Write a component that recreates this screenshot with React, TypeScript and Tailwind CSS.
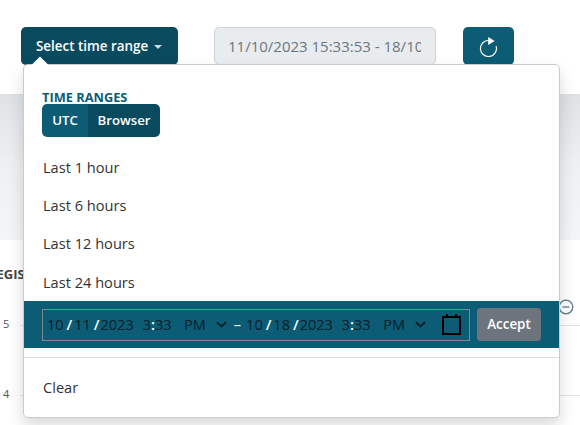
import React from "react";

const font = { fontFamily: '"Open Sans", "Noto Sans", sans-serif' };

function Segments({ d }: { d: string }) {
  return (
    <div className="flex items-center text-[14.5px] leading-[20px] text-[#04202b]">
      <span>10</span>
      <span className="ml-[3px] mr-[2px] text-white font-semibold">/</span>
      <span>{d}</span>
      <span className="ml-[3px] mr-[1px] text-white font-semibold">/</span>
      <span>2023</span>
      <span className="ml-[9px]">3</span>
      <span className="text-white font-semibold">:</span>
      <span>33</span>
      <span className="ml-[12.5px]">PM</span>
      <svg className="ml-[10px]" width="11" height="7" viewBox="0 0 11 7" fill="none">
        <path d="M1 1.2 5.5 5.4 10 1.2" stroke="#04202b" strokeWidth="2" />
      </svg>
    </div>
  );
}

export default function App() {
  return (
    <div className="relative w-[580px] h-[425px] overflow-hidden bg-white" style={font}>
      <div className="flex items-start h-[94px] pt-[27px] pl-[21px] bg-white">
        <button className="flex items-center h-[38px] w-[157px] pl-[15px] rounded-[5px] bg-[#0a4a5f] text-white text-[13.4px] font-semibold">
          Select time range
          <span className="ml-[6px] mt-[1px] border-x-[4px] border-x-transparent border-t-[4px] border-t-white opacity-80" />
        </button>
        <div className="ml-[36px] w-[222px] h-[38px] rounded-[5px] border border-[#ced4da] bg-[#e9ecef] pl-[13px] pr-[14px] flex items-center text-[#6c757d] text-[15px] whitespace-nowrap">
          <span className="block w-full overflow-hidden">11/10/2023 15:33:53 - 18/10/2023 15:33:53</span>
        </div>
        <button className="ml-[27px] w-[51px] h-[38px] rounded-[5px] bg-[#0c5c75] flex items-center justify-center">
          <svg width="20" height="22" viewBox="0 0 20 22" fill="none">
            <path d="M10 5.5A8 8 0 1 0 17.1 11.1" stroke="white" strokeWidth="1.2" />
            <path d="M9.2 2 15.6 6 9.2 10Z" fill="white" />
          </svg>
        </button>
      </div>
      <div className="h-[146px] bg-gradient-to-b from-[#dfe2e5] via-[#eef0f2] to-[#f4f5f6]" />
      <div className="relative h-[185px] bg-white">
        <div className="pt-[25px] -ml-[12px] text-[#444] text-[13px] font-bold">REGIS</div>
        <div className="absolute left-[3px] top-[76px] text-[11px] text-[#555]">5</div>
        <div className="absolute left-[3px] top-[146px] text-[11px] text-[#555]">4</div>
        <div className="absolute left-[20px] right-0 top-[85px] h-px bg-[#e3e3e3]" />
        <div className="absolute left-[20px] right-0 top-[155px] h-px bg-[#e3e3e3]" />
        <svg className="absolute left-[558px] top-[59px]" width="16" height="16" viewBox="0 0 16 16" fill="none">
          <circle cx="8" cy="8" r="6.8" stroke="#5f7a8c" strokeWidth="1.3" />
          <path d="M4.5 8h7" stroke="#5f7a8c" strokeWidth="1.3" />
        </svg>
      </div>

      <div className="absolute left-[23px] top-[64px] w-[537px] h-[354px] rounded-[5px] border border-[#c9cccf] bg-white shadow-[0_8px_16px_rgba(0,0,0,0.15)]">
        <div className="absolute left-[10px] -top-[6px] w-[12px] h-[12px] rotate-45 bg-white" />
        <div className="pt-[25px] pl-[18px]">
          <div className="text-[12.8px] leading-[14px] font-bold text-[#0c5c75]">TIME RANGES</div>
          <div className="flex h-[33px] w-[118px] text-white text-[13.2px] font-semibold">
            <span className="flex items-center justify-center w-[46px] rounded-l-[5px] bg-[#0c5c75]">UTC</span>
            <span className="flex items-center justify-center w-[72px] rounded-r-[5px] bg-[#0a4a5f]">Browser</span>
          </div>
        </div>
        <ul className="mt-[12px] text-[14.6px] text-[#333]">
          {["Last 1 hour", "Last 6 hours", "Last 12 hours"].map((t) => (
            <li key={t} className="h-[38px] pl-[19px] flex items-center">{t}</li>
          ))}
          <li className="h-[38px] pl-[19px] pt-[1px] flex items-center">Last 24 hours</li>
        </ul>
        <div className="flex items-center h-[47px] pl-[18px] pr-[18px] bg-[#0c5c75]">
          <div className="flex items-center w-[428px] h-[32px] border border-[#7c8a90] pl-[4px]">
            <Segments d="11" />
            <span className="ml-[7px] mr-[5px] text-[14.5px] leading-[20px] text-white">–</span>
            <Segments d="18" />
            <svg className="ml-[16px]" width="20" height="21" viewBox="0 0 20 21" fill="none">
              <rect x="1" y="3" width="17" height="17" stroke="black" strokeWidth="2" />
              <path d="M5 0v4M14 0v4" stroke="black" strokeWidth="2" />
            </svg>
          </div>
          <button className="ml-[7px] w-[64px] h-[33px] rounded-[4px] bg-[#6c757d] text-white text-[13.4px] font-semibold">Accept</button>
        </div>
        <div className="mt-[9px] h-px bg-[#dcdcdc]" />
        <div className="pl-[19px] pt-[19px] text-[14.6px] text-[#333]">Clear</div>
      </div>
    </div>
  );
}
